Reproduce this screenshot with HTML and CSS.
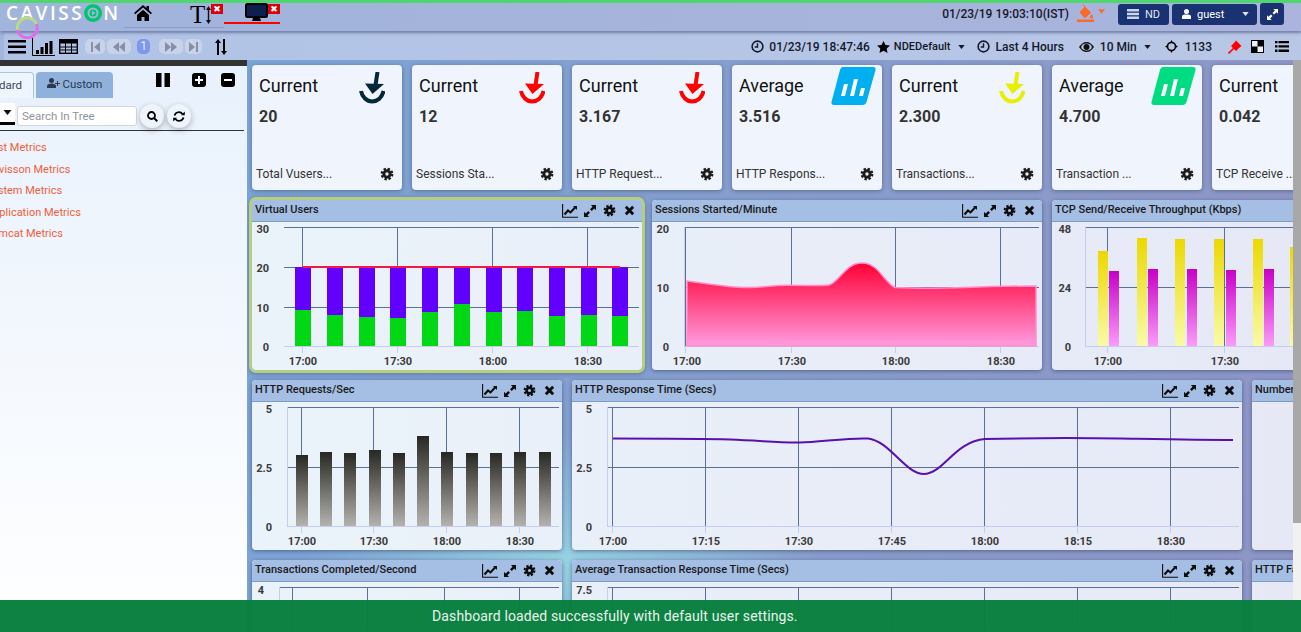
FILE: index.html
```html
<!DOCTYPE html>
<html lang="en">

<head>
    <meta charset="UTF-8">
    <title>Dashboard</title>
    <link rel="stylesheet" href="styles.css">
</head>

<body>
    <!-- shared icons -->
    <svg class="defs" width="0" height="0">
        <symbol id="i-gear" viewBox="0 0 16 16">
            <circle cx="8" cy="8" r="3.6" fill="none" stroke="currentColor" stroke-width="3.4"/>
            <circle cx="8" cy="8" r="6" fill="none" stroke="currentColor" stroke-width="2.6" stroke-dasharray="2.7 2.01"/>
        </symbol>
        <symbol id="i-trend" viewBox="0 0 16 14">
            <path d="M.6 0V13.2H16" fill="none" stroke="currentColor" stroke-width="1.1"/>
            <path d="M2.5 10.5 6 6.5l2.5 2L13.5 3" fill="none" stroke="currentColor" stroke-width="2"/>
            <path d="M11 2h4v4z" fill="currentColor"/>
        </symbol>
        <symbol id="i-expand" viewBox="0 0 14 14">
            <path d="M8 0h6v6l-2-2-3 3-2-2 3-3zM6 14H0V8l2 2 3-3 2 2-3 3z" fill="currentColor"/>
        </symbol>
        <symbol id="i-close" viewBox="0 0 12 12">
            <path d="M2 2l8 8M10 2l-8 8" fill="none" stroke="currentColor" stroke-width="3.2"/>
        </symbol>
        <symbol id="i-drop" viewBox="0 0 26 32">
            <path d="M18.5 0 16.5 13" fill="none" stroke="currentColor" stroke-width="4"/>
            <path d="M6 11.5 25 12 13.5 22z" fill="currentColor"/>
            <path d="M2 19c1 6 6 10.5 11 10.5S23 26 24.5 19" fill="none" stroke="currentColor" stroke-width="4"/>
        </symbol>
        <symbol id="i-tile" viewBox="0 0 45 38">
            <path d="M12 0h30c2 0 3 1 2.500 3l-9 32c-.5 2-2 3-4 3H3c-2 0-3-1.500-2.500-3L9 3c.6-2 1.500-3 3-3z" fill="currentColor"/>
            <path d="M10 29l3-12h4l-3 12zM19 29l4-17h4l-4 17zM28 29l2-8h4l-2 8z" fill="#fff"/>
        </symbol>
        <symbol id="i-clock" viewBox="0 0 14 14">
            <circle cx="7" cy="7" r="5.8" fill="none" stroke="currentColor" stroke-width="1.7"/>
            <path d="M7 3.5V7.5H4" fill="none" stroke="currentColor" stroke-width="1.5"/>
        </symbol>
        <symbol id="i-caret" viewBox="0 0 8 5">
            <path d="M0 0h8L4 5z" fill="currentColor"/>
        </symbol>
        <linearGradient id="g-area" x1="0" y1="0" x2="0" y2="1">
            <stop offset="0" stop-color="#ff0034"/>
            <stop offset="1" stop-color="#ff9ce0"/>
        </linearGradient>
        <linearGradient id="g-yellow" x1="0" y1="0" x2="0" y2="1">
            <stop offset="0" stop-color="#ecd800"/>
            <stop offset="1" stop-color="#f9fba8"/>
        </linearGradient>
        <linearGradient id="g-magenta" x1="0" y1="0" x2="0" y2="1">
            <stop offset="0" stop-color="#c800c8"/>
            <stop offset="1" stop-color="#fb9cf8"/>
        </linearGradient>
        <linearGradient id="g-dark" x1="0" y1="0" x2="0" y2="1">
            <stop offset="0" stop-color="#282823"/>
            <stop offset="1" stop-color="#b4b2ac"/>
        </linearGradient>
    </svg>

    <header class="header">
        <div class="logo">CAVISS<svg class="logo-o" width="18" height="18" viewBox="0 0 18 18"><circle cx="9" cy="9" r="9" fill="#00c46f"/><circle cx="9" cy="9" r="4.5" fill="none" stroke="#a3b6dc" stroke-width="2"/><path d="M8 6.500 11.500 9 8 11.500z" fill="#a3b6dc"/></svg><span>N</span></div>
        <svg class="home" width="18" height="16" viewBox="0 0 18 16"><path d="M9 0 0 8l1.200 1.300L9 2.500l7.800 6.800L18 8l-3-2.700V1h-2.500v2.100zM3 10v6h4.500v-4h3v4H15v-6L9 4.700z" fill="#000"/></svg>
        <div class="tab-t">
            <span class="tab-t-letter">T</span>
            <svg width="5" height="18" viewBox="0 0 5 18"><path d="M2.500 0 5 4H3.200v10H5l-2.500 4L0 14h1.800V4H0z" fill="#111"/></svg>
            <span class="red-x">✖</span>
        </div>
        <div class="tab-screen">
            <svg width="23" height="19" viewBox="0 0 23 19"><rect x="1" y="1" width="21" height="13" rx="1.5" fill="#0c1f4f" stroke="#000" stroke-width="2"/><path d="M8 15h7l1 3H7z" fill="#000"/></svg>
            <span class="red-x">✖</span>
        </div>
        <div class="header-right">
            <span class="now">01/23/19 19:03:10(IST)</span>
            <svg class="bucket" width="17" height="18" viewBox="0 0 17 18"><path d="M3 8 8 3l5.500 5.500-4.500 4.500a1.500 1.500 0 0 1-2 0zM6 0l2 3" fill="#fb6a2c" stroke="#fb6a2c"/><path d="M14.500 10c1 1.500 1.500 2 1.500 3a1.500 1.500 0 0 1-3 0c0-1 .5-1.500 1.500-3z" fill="#fb6a2c"/><rect y="15.500" width="17" height="2.500" fill="#fb6a2c"/></svg>
            <svg class="bucket-caret" width="7" height="5"><use href="#i-caret"/></svg>
            <button class="nav-btn nav-nd">
                <svg width="12" height="10" viewBox="0 0 12 10"><path d="M0 0h12v2.500H0zM0 3.700h12v2.600H0zM0 7.500h12V10H0z" fill="#c9d6ee"/></svg>
                ND
            </button>
            <button class="nav-btn nav-guest">
                <svg width="9" height="10" viewBox="0 0 9 10"><circle cx="4.5" cy="2.5" r="2.5" fill="#fff"/><path d="M0 10V7.500C0 6 1.500 5.500 4.500 5.500S9 6 9 7.500V10z" fill="#fff"/></svg>
                <span class="guest-name">guest</span>
                <svg width="7" height="4"><use href="#i-caret"/></svg>
            </button>
            <button class="nav-btn nav-full"><svg width="11" height="11"><use href="#i-expand"/></svg></button>
        </div>
    </header>

    <div class="toolbar">
        <svg class="tb-menu" width="18" height="14" viewBox="0 0 18 14"><path d="M0 0h18v2.600H0zM0 5.500h18v2.600H0zM0 11h18v2.600H0z" fill="#000"/></svg>
        <svg class="tb-bars" width="23" height="18" viewBox="0 0 23 18"><path d="M.5 0V17.500H23" fill="none" stroke="#000"/><path d="M4 12h3v4H4zM8.500 9h3v7h-3zM13 5h3v11h-3zM17.500 3h3v13h-3z" fill="#000"/></svg>
        <svg class="tb-table" width="19" height="15" viewBox="0 0 19 15"><rect x=".7" y=".7" width="17.6" height="13.6" fill="none" stroke="#000" stroke-width="1.4"/><path d="M0 1h19v3H0zM1 8h17M1 11h17M6.500 4v10M12.500 4v10" fill="#000" stroke="#000"/></svg>
        <div class="pager">
            <span class="page-btn pb-first"><svg width="9" height="10" viewBox="0 0 9 10"><path d="M0 0h2v10H0zM9 0v10L3 5z" fill="#858fa8"/></svg></span>
            <span class="page-btn pb-long"><svg width="12" height="10" viewBox="0 0 12 10"><path d="M6 0v10L0 5zM12 0v10L6 5z" fill="#858fa8"/></svg></span>
            <span class="page-num">1</span>
            <span class="page-btn pb-long"><svg width="12" height="10" viewBox="0 0 12 10"><path d="M0 0v10l6-5zM6 0v10l6-5z" fill="#858fa8"/></svg></span>
            <span class="page-btn pb-last"><svg width="9" height="10" viewBox="0 0 9 10"><path d="M0 0v10l6-5zM7 0h2v10H7z" fill="#858fa8"/></svg></span>
        </div>
        <svg class="tb-sort" width="12" height="16" viewBox="0 0 12 16"><path d="M3 0 6 4H4v12H2V4H0zM8 0h2v12h2l-3 4-3-4h2z" fill="#000"/></svg>

        <div class="tb-right">
            <svg class="ic-clock" width="13" height="13"><use href="#i-clock"/></svg>
            <span class="tb-from">01/23/19 18:47:46</span>
            <svg class="ic-star" width="13" height="12" viewBox="0 0 13 12"><path d="M6.500 0l2 4 4.500.6-3.300 3 .8 4.400-4-2.200L2.500 12l.8-4.400L0 4.600 4.500 4z" fill="#000"/></svg>
            <span class="tb-view">NDEDefault</span>
            <svg class="ic-caret" width="7" height="4"><use href="#i-caret"/></svg>
            <svg class="ic-clock2" width="13" height="13"><use href="#i-clock"/></svg>
            <span class="tb-range">Last 4 Hours</span>
            <svg class="ic-eye" width="15" height="10" viewBox="0 0 15 10"><path d="M0 5c2-3 4.500-5 7.500-5S13 2 15 5c-2 3-4.500 5-7.500 5S2 8 0 5z" fill="#111"/><ellipse cx="7.5" cy="5" rx="5.3" ry="3.6" fill="#b9c7e6"/><circle cx="7.5" cy="5" r="3" fill="#111"/></svg>
            <span class="tb-step">10 Min</span>
            <svg class="ic-caret" width="7" height="4"><use href="#i-caret"/></svg>
            <svg class="ic-cross" width="13" height="13" viewBox="0 0 13 13"><circle cx="6.5" cy="6.5" r="4" fill="none" stroke="#000" stroke-width="1.6"/><path d="M6.500 0l1.700 3H4.800zM6.500 13l-1.700-3h3.400zM0 6.500l3-1.700v3.400zM13 6.500l-3 1.700V4.800z" fill="#000"/></svg>
            <span class="tb-count">1133</span>
            <svg class="ic-pin" width="14" height="14" viewBox="0 0 14 14"><path d="M.5 13.500 6 8" stroke="#f00" stroke-width="1.6"/><path d="M3 6l3-3 5 5-3 3zM6 3l2-2.500L13.500 6 11 8z" fill="#f00"/></svg>
            <svg class="ic-check" width="13" height="13" viewBox="0 0 13 13"><rect x=".5" y=".5" width="12" height="12" fill="#eef1f8" stroke="#000"/><path d="M6.500 0H13v6.500H6.500zM0 6.500h6.500V13H0z" fill="#000"/></svg>
            <svg class="ic-list" width="14" height="11" viewBox="0 0 14 11"><path d="M0 0h2.500v2.300H0zM3.500 0H14v2.300H3.500zM0 4.300h2.500v2.300H0zM3.500 4.300H14v2.300H3.500zM0 8.600h2.500v2.300H0zM3.500 8.600H14v2.300H3.500z" fill="#000"/></svg>
        </div>
    </div>

    <div class="content">
        <aside class="sidebar">
            <div class="tree-scroll">
                <div class="tabs">
                    <span class="tab tab-active">Standard</span>
                    <span class="tab tab-custom">
                        <svg width="13" height="10" viewBox="0 0 13 10"><circle cx="4.5" cy="2.5" r="2.5" fill="#2b3850"/><path d="M0 10V8c0-1.500 2-2.500 4.500-2.500S9 6.500 9 8v2z" fill="#2b3850"/><path d="M10 3h1v2h2v1h-2v2h-1V6H8V5h2z" fill="#2b3850"/></svg>
                        Custom
                    </span>
                    <svg class="ic-pause" width="14" height="14" viewBox="0 0 14 14"><path d="M0 0h5.500v14H0zM8.500 0H14v14H8.500z" fill="#000"/></svg>
                    <svg class="ic-plus" width="14" height="14" viewBox="0 0 14 14"><rect width="14" height="14" rx="3" fill="#000"/><path d="M6 3h2v3h3v2H8v3H6V8H3V6h3z" fill="#fff"/></svg>
                    <svg class="ic-minus" width="14" height="14" viewBox="0 0 14 14"><rect width="14" height="14" rx="3" fill="#000"/><path d="M3 6h8v2H3z" fill="#fff"/></svg>
                </div>
                <div class="search-row">
                    <span class="tree-select"><svg width="9" height="5"><use href="#i-caret"/></svg></span>
                    <input class="tree-search" type="text" placeholder="Search In Tree">
                    <span class="round-btn"><svg width="11" height="11" viewBox="0 0 11 11"><circle cx="4.5" cy="4.5" r="3.5" fill="none" stroke="#000" stroke-width="1.8"/><path d="M7 7l3.300 3.300" stroke="#000" stroke-width="2"/></svg></span>
                    <span class="round-btn"><svg width="12" height="11" viewBox="0 0 12 11"><path d="M1.500 4.500A4.500 4.500 0 0 1 9.500 3M10.500 6.500A4.500 4.500 0 0 1 2.500 8" fill="none" stroke="#000" stroke-width="1.7"/><path d="M8 4.200h3.800V.5zM4 6.800H.2v3.700z" fill="#000"/></svg></span>
                </div>
                <ul class="tree">
                    <li>Test Metrics</li>
                    <li>Cavisson Metrics</li>
                    <li>System Metrics</li>
                    <li>Application Metrics</li>
                    <li>Tomcat Metrics</li>
                </ul>
            </div>
        </aside>

        <main class="main">
            <div class="cards">
                <div class="card">
                    <div class="card-type">Current</div>
                    <div class="card-value">20</div>
                    <svg class="card-icon ci-navy" width="26" height="32"><use href="#i-drop"/></svg>
                    <div class="card-foot"><span>Total Vusers...</span><svg width="14" height="14"><use href="#i-gear"/></svg></div>
                </div>
                <div class="card">
                    <div class="card-type">Current</div>
                    <div class="card-value">12</div>
                    <svg class="card-icon ci-red" width="26" height="32"><use href="#i-drop"/></svg>
                    <div class="card-foot"><span>Sessions Sta...</span><svg width="14" height="14"><use href="#i-gear"/></svg></div>
                </div>
                <div class="card">
                    <div class="card-type">Current</div>
                    <div class="card-value">3.167</div>
                    <svg class="card-icon ci-red" width="26" height="32"><use href="#i-drop"/></svg>
                    <div class="card-foot"><span>HTTP Request...</span><svg width="14" height="14"><use href="#i-gear"/></svg></div>
                </div>
                <div class="card">
                    <div class="card-type">Average</div>
                    <div class="card-value">3.516</div>
                    <svg class="card-tile ci-blue" width="45" height="38"><use href="#i-tile"/></svg>
                    <div class="card-foot"><span>HTTP Respons...</span><svg width="14" height="14"><use href="#i-gear"/></svg></div>
                </div>
                <div class="card">
                    <div class="card-type">Current</div>
                    <div class="card-value">2.300</div>
                    <svg class="card-icon ci-yellow" width="26" height="32"><use href="#i-drop"/></svg>
                    <div class="card-foot"><span>Transactions...</span><svg width="14" height="14"><use href="#i-gear"/></svg></div>
                </div>
                <div class="card">
                    <div class="card-type">Average</div>
                    <div class="card-value">4.700</div>
                    <svg class="card-tile ci-green" width="45" height="38"><use href="#i-tile"/></svg>
                    <div class="card-foot"><span>Transaction ...</span><svg width="14" height="14"><use href="#i-gear"/></svg></div>
                </div>
                <div class="card">
                    <div class="card-type">Current</div>
                    <div class="card-value">0.042</div>
                    <svg class="card-icon ci-red" width="26" height="32"><use href="#i-drop"/></svg>
                    <div class="card-foot"><span>TCP Receive ...</span><svg width="14" height="14"><use href="#i-gear"/></svg></div>
                </div>
            </div>

            <div class="row">
                <section class="panel panel-selected">
                    <div class="panel-head">
                        <span class="panel-title">Virtual Users</span>
                        <span class="panel-tools"><svg class="t-trend" width="16" height="14"><use href="#i-trend"/></svg><svg class="t-expand" width="12" height="12"><use href="#i-expand"/></svg><svg class="t-gear" width="13" height="13"><use href="#i-gear"/></svg><svg class="t-close" width="11" height="11"><use href="#i-close"/></svg></span>
                    </div>
                    <svg class="chart" width="390" height="148" viewBox="252 222 390 148">
                        <path class="grid" d="M284 227.500H639M284 267.500H639M284 307.500H639M302.500 227V346M397.500 227V346M492.500 227V346M587.500 227V346"/>
                        <path class="base" d="M284 346.500H639M302.500 346V353M397.500 346V353M492.500 346V353M587.500 346V353"/>
                        <g class="purple">
                            <rect x="295" y="267" width="16" height="43"/><rect x="327" y="267" width="16" height="48"/><rect x="359" y="267" width="16" height="50"/><rect x="390" y="267" width="16" height="51"/><rect x="422" y="267" width="16" height="45"/><rect x="454" y="267" width="16" height="37"/><rect x="486" y="267" width="16" height="45"/><rect x="517" y="267" width="16" height="44"/><rect x="549" y="267" width="16" height="49"/><rect x="581" y="267" width="16" height="48"/><rect x="612" y="267" width="16" height="49"/>
                        </g>
                        <g class="green">
                            <rect x="295" y="310" width="16" height="36"/><rect x="327" y="315" width="16" height="31"/><rect x="359" y="317" width="16" height="29"/><rect x="390" y="318" width="16" height="28"/><rect x="422" y="312" width="16" height="34"/><rect x="454" y="304" width="16" height="42"/><rect x="486" y="312" width="16" height="34"/><rect x="517" y="311" width="16" height="35"/><rect x="549" y="316" width="16" height="30"/><rect x="581" y="315" width="16" height="31"/><rect x="612" y="316" width="16" height="30"/>
                        </g>
                        <path class="red-line" d="M302.500 267H620"/>
                        <g class="ylab"><text x="269" y="233">30</text><text x="269" y="272">20</text><text x="269" y="312">10</text><text x="269" y="351">0</text></g>
                        <g class="xlab"><text x="303" y="365">17:00</text><text x="398" y="365">17:30</text><text x="493" y="365">18:00</text><text x="588" y="365">18:30</text></g>
                    </svg>
                </section>
                <section class="panel">
                    <div class="panel-head">
                        <span class="panel-title">Sessions Started/Minute</span>
                        <span class="panel-tools"><svg class="t-trend" width="16" height="14"><use href="#i-trend"/></svg><svg class="t-expand" width="12" height="12"><use href="#i-expand"/></svg><svg class="t-gear" width="13" height="13"><use href="#i-gear"/></svg><svg class="t-close" width="11" height="11"><use href="#i-close"/></svg></span>
                    </div>
                    <svg class="chart" width="390" height="148" viewBox="652 222 390 148">
                        <path class="grid" d="M684 227.500H1039M684 287.500H1039M685.500 227V346M791.500 227V346M895.500 227V346M1000.500 227V346"/>
                        <path class="base" d="M684 346.500H1039M684.500 227V346M685.500 346V353M791.500 346V353M895.500 346V353M1000.500 346V353"/>
                        <path d="M687 281C710 284 730 288 750 287.500S770 285.500 787 285.300 825 286 829 285C840 282 845 263 862 263S884 283 895 287.500C915 288.500 940 288.500 965 287.500S1015 286 1036 286V346H687Z" fill="url(#g-area)" stroke="#ff8ccb" stroke-width="1.5"/>
                        <g class="ylab"><text x="669" y="233">20</text><text x="669" y="292">10</text><text x="669" y="351">0</text></g>
                        <g class="xlab"><text x="687" y="365">17:00</text><text x="792" y="365">17:30</text><text x="896" y="365">18:00</text><text x="1001" y="365">18:30</text></g>
                    </svg>
                </section>
                <section class="panel">
                    <div class="panel-head">
                        <span class="panel-title">TCP Send/Receive Throughput (Kbps)</span>
                    </div>
                    <svg class="chart" width="390" height="148" viewBox="1052 222 390 148">
                        <path class="grid" d="M1085 227.500H1439M1085 287.500H1439M1107.500 227V346M1224.500 227V346"/>
                        <path class="base" d="M1085 346.500H1439M1085.500 227V346M1107.500 346V353M1224.500 346V353"/>
                        <g fill="url(#g-yellow)">
                            <rect x="1098" y="251" width="10" height="95"/><rect x="1137" y="238" width="10" height="108"/><rect x="1175" y="239" width="10" height="107"/><rect x="1214" y="239" width="10" height="107"/><rect x="1253" y="239" width="10" height="107"/><rect x="1290" y="247" width="10" height="99"/>
                        </g>
                        <g fill="url(#g-magenta)">
                            <rect x="1109" y="271" width="10" height="75"/><rect x="1148" y="269" width="10" height="77"/><rect x="1187" y="269" width="10" height="77"/><rect x="1226" y="270" width="10" height="76"/><rect x="1264" y="269" width="10" height="77"/>
                        </g>
                        <g class="ylab"><text x="1071" y="233">48</text><text x="1071" y="292">24</text><text x="1071" y="351">0</text></g>
                        <g class="xlab"><text x="1108" y="365">17:00</text><text x="1225" y="365">17:30</text></g>
                    </svg>
                </section>
            </div>

            <div class="row">
                <section class="panel panel-sm">
                    <div class="panel-head">
                        <span class="panel-title">HTTP Requests/Sec</span>
                        <span class="panel-tools"><svg class="t-trend" width="16" height="14"><use href="#i-trend"/></svg><svg class="t-expand" width="12" height="12"><use href="#i-expand"/></svg><svg class="t-gear" width="13" height="13"><use href="#i-gear"/></svg><svg class="t-close" width="11" height="11"><use href="#i-close"/></svg></span>
                    </div>
                    <svg class="chart" width="310" height="148" viewBox="252 402 310 148">
                        <path class="grid" d="M287 407.500H559M287 467.500H559M301.500 407V526M373.500 407V526M446.500 407V526M519.500 407V526"/>
                        <path class="base" d="M287 526.500H559M287.500 407V526M301.500 526V533M373.500 526V533M446.500 526V533M519.500 526V533"/>
                        <g fill="url(#g-dark)">
                            <rect x="296" y="455" width="12" height="71"/><rect x="320" y="452" width="12" height="74"/><rect x="344" y="453" width="12" height="73"/><rect x="369" y="450" width="12" height="76"/><rect x="393" y="453" width="12" height="73"/><rect x="417" y="436" width="12" height="90"/><rect x="441" y="452" width="12" height="74"/><rect x="466" y="453" width="12" height="73"/><rect x="490" y="453" width="12" height="73"/><rect x="514" y="452" width="12" height="74"/><rect x="539" y="452" width="12" height="74"/>
                        </g>
                        <g class="ylab"><text x="272" y="413">5</text><text x="272" y="472">2.5</text><text x="272" y="531">0</text></g>
                        <g class="xlab"><text x="302" y="545">17:00</text><text x="374" y="545">17:30</text><text x="447" y="545">18:00</text><text x="520" y="545">18:30</text></g>
                    </svg>
                </section>
                <section class="panel panel-lg">
                    <div class="panel-head">
                        <span class="panel-title">HTTP Response Time (Secs)</span>
                        <span class="panel-tools"><svg class="t-trend" width="16" height="14"><use href="#i-trend"/></svg><svg class="t-expand" width="12" height="12"><use href="#i-expand"/></svg><svg class="t-gear" width="13" height="13"><use href="#i-gear"/></svg><svg class="t-close" width="11" height="11"><use href="#i-close"/></svg></span>
                    </div>
                    <svg class="chart" width="670" height="148" viewBox="572 402 670 148">
                        <path class="grid" d="M607 407.500H1239M607 467.500H1239M612.500 407V526M705.500 407V526M798.500 407V526M891.500 407V526M984.500 407V526M1077.500 407V526M1170.500 407V526"/>
                        <path class="base" d="M607 526.500H1239M607.500 407V526M612.500 526V533M705.500 526V533M798.500 526V533M891.500 526V533M984.500 526V533M1077.500 526V533M1170.500 526V533"/>
                        <path class="line" d="M613 438.500C660 438.500 700 438.500 730 439.500S780 443 800 442.500 850 437.500 868 438.500C890 441 905 474 924 474S955 441 985 439C1030 438 1090 438 1120 438.500S1200 440 1233 440"/>
                        <g class="ylab"><text x="592" y="413">5</text><text x="592" y="472">2.5</text><text x="592" y="531">0</text></g>
                        <g class="xlab"><text x="613" y="545">17:00</text><text x="706" y="545">17:15</text><text x="799" y="545">17:30</text><text x="892" y="545">17:45</text><text x="985" y="545">18:00</text><text x="1078" y="545">18:15</text><text x="1171" y="545">18:30</text></g>
                    </svg>
                </section>
                <section class="panel">
                    <div class="panel-head">
                        <span class="panel-title">Number of Connections</span>
                    </div>
                </section>
            </div>

            <div class="row">
                <section class="panel panel-sm">
                    <div class="panel-head">
                        <span class="panel-title">Transactions Completed/Second</span>
                        <span class="panel-tools"><svg class="t-trend" width="16" height="14"><use href="#i-trend"/></svg><svg class="t-expand" width="12" height="12"><use href="#i-expand"/></svg><svg class="t-gear" width="13" height="13"><use href="#i-gear"/></svg><svg class="t-close" width="11" height="11"><use href="#i-close"/></svg></span>
                    </div>
                    <svg class="chart" width="310" height="48" viewBox="252 582 310 48">
                        <path class="grid" d="M279 587.500H559M292.500 587V630M367.500 587V630M444.500 587V630M519.500 587V630"/>
                        <path class="base" d="M279.500 587V630"/>
                        <g class="ylab"><text x="264" y="594">4</text></g>
                    </svg>
                </section>
                <section class="panel panel-lg">
                    <div class="panel-head">
                        <span class="panel-title">Average Transaction Response Time (Secs)</span>
                        <span class="panel-tools"><svg class="t-trend" width="16" height="14"><use href="#i-trend"/></svg><svg class="t-expand" width="12" height="12"><use href="#i-expand"/></svg><svg class="t-gear" width="13" height="13"><use href="#i-gear"/></svg><svg class="t-close" width="11" height="11"><use href="#i-close"/></svg></span>
                    </div>
                    <svg class="chart" width="670" height="48" viewBox="572 582 670 48">
                        <path class="grid" d="M607 587.500H1239M612.500 587V630M705.500 587V630M798.500 587V630M891.500 587V630M984.500 587V630M1077.500 587V630M1170.500 587V630"/>
                        <path class="base" d="M607.500 587V630"/>
                        <g class="ylab"><text x="592" y="594">7.5</text></g>
                    </svg>
                </section>
                <section class="panel">
                    <div class="panel-head">
                        <span class="panel-title">HTTP Failures/Sec</span>
                    </div>
                </section>
            </div>

            <div class="scrollbar"><div class="scroll-thumb"></div></div>
        </main>
    </div>

    <!-- loading ring over the logo -->
    <svg class="spinner" width="24" height="24" viewBox="0 0 24 24">
        <path d="M2.500 15A10 10 0 0 1 21.500 9" fill="none" stroke="#b9dc80" stroke-width="3"/>
        <path d="M21.500 9A10 10 0 1 1 2.500 15" fill="none" stroke="#e06fe6" stroke-width="3"/>
    </svg>

    <div class="toast">Dashboard loaded successfully with default user settings.</div>
</body>

</html>
```

FILE: styles.css
```css
* {
    box-sizing: border-box;
}

html, body {
    height: 100%;
}

body {
    margin: 0;
    height: 632px;
    overflow: hidden;
    position: relative;
    display: flex;
    flex-direction: column;
    font-family: Roboto, "Liberation Sans", sans-serif;
    color: #111;
    background: #a3b5dc;
}

.defs {
    position: absolute;
}

/* top bar */
.header {
    height: 31px;
    flex: none;
    display: flex;
    align-items: flex-start;
    border-top: 3px solid #4fd66e;
    background: linear-gradient(90deg, #a0b4dc, #a6b3da 60%, #aab4dc);
    box-shadow: 0 2px 3px rgba(70, 80, 120, .5);
    position: relative;
    z-index: 2;
}

.header::after {
    content: "";
    position: absolute;
    left: 124px;
    top: 24px;
    width: 100px;
    height: 1px;
    background: #8a9bc4;
}

.logo {
    width: 128px;
    margin-left: 6px;
    display: flex;
    align-items: center;
    height: 19px;
    font-family: "Open Sans", sans-serif;
    font-weight: 600;
    font-size: 19px;
    letter-spacing: 2.5px;
    color: #fff;
}

.logo-o {
    margin-right: 1px;
    flex: none;
}

.logo span {
    letter-spacing: 0;
}

.home {
    margin-top: 2px;
    flex: none;
}

.tab-t {
    margin-left: 38px;
    width: 34px;
    height: 24px;
    display: flex;
    align-items: center;
    position: relative;
}

.tab-t-letter {
    font-family: "Liberation Serif", serif;
    font-size: 25px;
    line-height: 24px;
    color: #000;
    margin-right: 1px;
}

.red-x {
    position: absolute;
    top: 1px;
    width: 12px;
    height: 10px;
    background: #d8000c;
    color: #fff;
    font-family: "DejaVu Sans", sans-serif;
    font-size: 9px;
    line-height: 10px;
    text-align: center;
}

.tab-t .red-x {
    left: 21px;
}

.tab-screen {
    width: 56px;
    height: 21px;
    padding-left: 21px;
    position: relative;
    border-bottom: 2px solid #f00;
}

.tab-screen svg {
    display: block;
}

.tab-screen .red-x {
    left: 44px;
}

.header-right {
    margin-left: auto;
    padding-right: 17px;
    display: flex;
    align-items: center;
    height: 22px;
}

.now {
    font-size: 12px;
    font-weight: 500;
    color: #14182a;
    margin-right: 8px;
}

.bucket {
    margin-top: -2px;
}

.bucket-caret {
    color: #fb6a2c;
    margin: -6px 13px 0 4px;
}

.nav-btn {
    height: 21px;
    border: 0;
    border-radius: 3px;
    padding: 0;
    background: #1a3172;
    color: #fff;
    font-family: inherit;
    font-size: 11px;
    display: flex;
    align-items: center;
}

.nav-nd {
    width: 51px;
    justify-content: center;
    gap: 6px;
    color: #dfe6f5;
}

.nav-guest {
    width: 85px;
    margin-left: 3px;
    padding-left: 10px;
}

.nav-guest svg:last-child {
    color: #dfe6f5;
    margin-left: auto;
    margin-right: 8px;
}

.guest-name {
    margin-left: 6px;
}

.nav-full {
    width: 24px;
    height: 22px;
    margin-left: 3px;
    justify-content: center;
}

/* second bar */
.toolbar {
    height: 27px;
    flex: none;
    margin-top: 2px;
    margin-left: 4px;
    display: flex;
    align-items: center;
    background: linear-gradient(90deg, #b0c3e6, #b9c7e6);
}

.tb-menu {
    margin-left: 4px;
}

.tb-bars {
    margin-left: 6px;
}

.tb-table {
    margin-left: 4px;
}

.pager {
    display: flex;
    align-items: center;
    margin-left: 7px;
}

.page-btn {
    height: 15px;
    border-radius: 5px;
    background: #c8d2e8;
    display: flex;
    align-items: center;
    justify-content: center;
    margin-right: 2px;
}

.pb-first {
    width: 20px;
}

.pb-last {
    width: 17px;
}

.pb-long {
    width: 24px;
}

.page-num {
    width: 13px;
    height: 15px;
    margin: 0 9px 0 4px;
    border-radius: 5px;
    background: #7f98ec;
    color: #e8edfa;
    font-size: 12px;
    line-height: 15px;
    text-align: center;
}

.tb-sort {
    margin-left: 11px;
}

.tb-right {
    margin-left: auto;
    padding-right: 12px;
    display: flex;
    align-items: center;
    font-size: 12px;
    font-weight: 500;
    color: #14182a;
}

.tb-from {
    margin-left: 5px;
}

.ic-star {
    margin-left: 7px;
}

.tb-view {
    margin-left: 4px;
    font-size: 11px;
}

.ic-caret {
    margin-left: 7px;
}

.ic-clock2 {
    margin-left: 12px;
}

.tb-range {
    margin-left: 6px;
}

.ic-eye {
    margin-left: 15px;
}

.tb-step {
    margin-left: 6px;
}

.ic-cross {
    margin-left: 14px;
}

.tb-count {
    margin-left: 7px;
}

.ic-pin {
    margin-left: 16px;
}

.ic-check {
    margin-left: 9px;
}

.ic-list {
    margin-left: 11px;
}

/* below the bars */
.content {
    flex: 1;
    min-height: 0;
    display: flex;
}

.sidebar {
    width: 247px;
    flex: none;
    overflow: hidden;
    border-top: 6px solid #333;
    background: linear-gradient(180deg, #e8f1fc, #fff);
}

.tree-scroll {
    width: 291px;
    margin-left: -44px;
}

.tabs {
    height: 34px;
    padding-top: 6px;
    display: flex;
    align-items: flex-start;
}

.tab {
    height: 26px;
    font-size: 11.5px;
    line-height: 25px;
    color: #3c4658;
    border-radius: 4px 4px 0 0;
}

.tab-active {
    width: 78px;
    text-align: center;
    padding-left: 8px;
    border: 1px solid #a9c4ea;
    border-bottom: 0;
    background: #eef5fd;
}

.tab-custom {
    width: 77px;
    margin-left: 2px;
    background: #8fb1dc;
    text-align: center;
    color: #2b3850;
}

.ic-pause {
    margin: 1px 0 0 43px;
}

.ic-plus {
    margin: 1px 0 0 22px;
}

.ic-minus {
    margin: 1px 0 0 15px;
}

.search-row {
    height: 31px;
    display: flex;
    align-items: flex-start;
    border-bottom: 1px solid #333;
    margin-right: 3px;
    padding-left: 36px;
}

.tree-select {
    width: 23px;
    height: 22px;
    margin-top: 3px;
    background: #fff;
    border-bottom: 3px solid #000;
    display: flex;
    align-items: center;
    justify-content: center;
}

.tree-select svg {
    margin-left: 8px;
}

.tree-search {
    width: 120px;
    height: 20px;
    margin: 6px 0 0 2px;
    padding: 0 4px;
    border: 1px solid #d3d6dc;
    border-radius: 3px;
    background: #fff;
    font-family: inherit;
    font-size: 11.5px;
}

.tree-search::placeholder {
    color: #8f949c;
}

.round-btn {
    width: 24px;
    height: 24px;
    margin: 4px 0 0 3px;
    border-radius: 50%;
    background: #eef4fc;
    box-shadow: 0 2px 6px rgba(0, 0, 0, .28);
    display: flex;
    align-items: center;
    justify-content: center;
}

.tree {
    list-style: none;
    margin: 0;
    padding: 6px 0 0 30px;
    font-size: 11px;
    color: #f0603a;
}

.tree li {
    height: 21.5px;
    line-height: 21.5px;
}

/* dashboard */
.main {
    flex: 1;
    min-width: 0;
    position: relative;
    overflow: hidden;
    padding: 5px 0 0 5px;
    background:
        radial-gradient(ellipse 260px 130px at 30% 88%, #97d2e2, rgba(151, 210, 226, 0)),
        linear-gradient(100deg, #7ba5d6, #8a9ccb 60%, #8f96c6);
}

.cards {
    display: flex;
    gap: 10px;
    height: 125px;
}

.card {
    width: 150px;
    height: 125px;
    flex: none;
    position: relative;
    padding: 10px 0 0 7px;
    border-radius: 4px;
    background: #f0f4fc;
    box-shadow: 0 1px 4px rgba(40, 60, 100, .5);
}

.card-type {
    font-size: 18px;
    line-height: 21px;
}

.card-value {
    margin-top: 11px;
    font-size: 16px;
    line-height: 19px;
    font-weight: 700;
    color: #333;
}

.card-icon {
    position: absolute;
    top: 7px;
    right: 17px;
}

.card-tile {
    position: absolute;
    top: 2px;
    right: 6px;
}

.ci-navy {
    color: #03283a;
}

.ci-red {
    color: #f00;
}

.ci-yellow {
    color: #e6f000;
}

.ci-blue {
    color: #00aff0;
}

.ci-green {
    color: #00dc82;
}

.card-foot {
    position: absolute;
    left: 4px;
    right: 8px;
    bottom: 9px;
    display: flex;
    justify-content: space-between;
    align-items: center;
    font-size: 12px;
    color: #333;
}

.card-foot svg {
    color: #1c1c1c;
}

.row {
    display: flex;
    gap: 10px;
    margin-top: 10px;
    height: 170px;
}

.panel {
    width: 390px;
    height: 170px;
    flex: none;
    border-radius: 4px;
    overflow: hidden;
    background: linear-gradient(90deg, #ecf6fb, #e6e8f6) fixed;
    box-shadow: 0 1px 4px rgba(40, 60, 100, .6);
}

.panel-selected {
    overflow: visible;
    box-shadow: 0 0 0 3px #b7ce7e, 0 1px 5px 3px rgba(40, 60, 100, .4);
}

.panel-sm {
    width: 310px;
}

.panel-lg {
    width: 670px;
}

.panel-head {
    height: 22px;
    padding: 0 7px 0 3px;
    display: flex;
    align-items: center;
    justify-content: space-between;
    border-bottom: 1px solid #7d9cc6;
    border-radius: 4px 4px 0 0;
    background: #a5bee3;
}

.panel-title {
    font-size: 11px;
    font-weight: 500;
    color: #1a1a1a;
    white-space: nowrap;
    margin-top: -2px;
}

.panel-tools {
    display: flex;
    align-items: center;
    color: #0c0c0c;
}

.t-expand {
    margin-left: 6px;
}

.t-gear {
    margin-left: 7px;
}

.t-close {
    margin-left: 8px;
}

.chart {
    display: block;
}

.grid {
    fill: none;
    stroke: #5a7098;
}

.base {
    fill: none;
    stroke: #c6cdec;
}

.purple {
    fill: #6200ff;
}

.green {
    fill: #00d815;
}

.red-line {
    fill: none;
    stroke: #f5164c;
    stroke-width: 2;
}

.line {
    fill: none;
    stroke: #5a10b0;
    stroke-width: 2;
}

.ylab, .xlab {
    font-family: Roboto, "Liberation Sans", sans-serif;
    font-size: 11px;
    font-weight: 700;
    fill: #3a3a3a;
}

.ylab {
    text-anchor: end;
}

.xlab {
    text-anchor: middle;
}

.scrollbar {
    position: absolute;
    top: 0;
    right: 0;
    bottom: 0;
    width: 8px;
    background: #f1f1f1;
}

.scroll-thumb {
    height: 463px;
    background: #a8a8a8;
}

.spinner {
    position: absolute;
    left: 15px;
    top: 15px;
    z-index: 3;
}

.toast {
    position: absolute;
    left: 0;
    right: 0;
    bottom: 0;
    height: 32px;
    z-index: 5;
    padding-left: 432px;
    background: rgba(8, 128, 62, .98);
    color: #e8f4ec;
    font-size: 14px;
    letter-spacing: .12px;
    line-height: 32px;
}
```
